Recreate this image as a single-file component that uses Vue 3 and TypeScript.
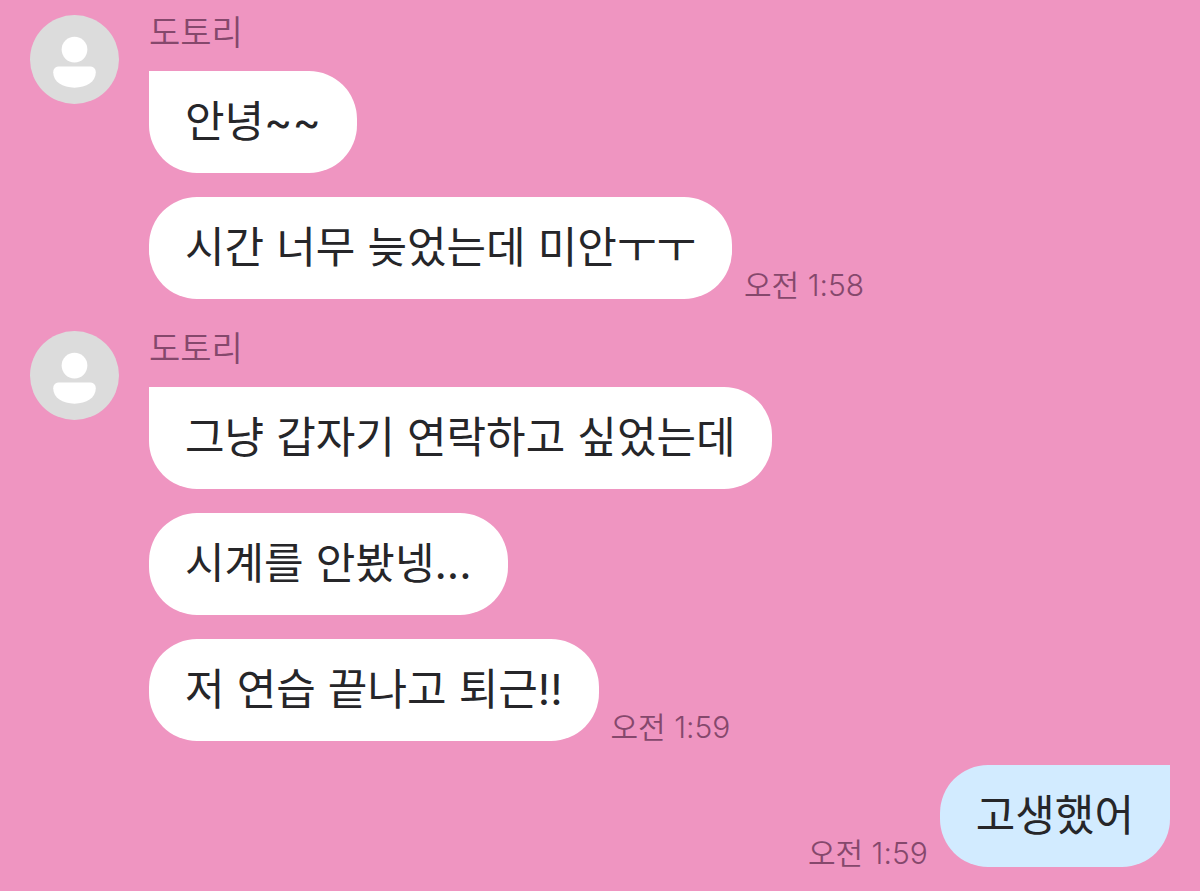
<script setup lang="ts">
interface Message {
  text: string
}

interface Group {
  id: number
  mine: boolean
  sender?: string
  time: string
  messages: Message[]
}

const groups: Group[] = [
  {
    id: 1,
    mine: false,
    sender: '도토리',
    time: '오전 1:58',
    messages: [{ text: '안녕~~' }, { text: '시간 너무 늦었는데 미안ㅜㅜ' }],
  },
  {
    id: 2,
    mine: false,
    sender: '도토리',
    time: '오전 1:59',
    messages: [{ text: '그냥 갑자기 연락하고 싶었는데' }, { text: '시계를 안봤넹...' }, { text: '저 연습 끝나고 퇴근!!' }],
  },
  { id: 3, mine: true, time: '오전 1:59', messages: [{ text: '고생했어' }] },
]
</script>

<template>
  <main class="chat">
    <section v-for="group in groups" :key="group.id" class="group" :class="{ mine: group.mine }">
      <svg v-if="!group.mine" class="avatar" viewBox="0 0 90 90" aria-hidden="true">
        <circle cx="45" cy="45" r="45" fill="#dcdcdc" />
        <circle cx="45" cy="35" r="13" fill="#fff" />
        <path d="M30 52H60C64 52 66.500 54 66.500 58C66.500 68 57 73.500 45 73.500S23.500 68 23.500 58C23.500 54 26 52 30 52Z" fill="#fff" />
      </svg>
      <div class="body">
        <h2 v-if="group.sender" class="sender">{{ group.sender }}</h2>
        <div v-for="(message, index) in group.messages" :key="index" class="row">
          <p class="bubble" :class="{ first: index === 0 }">{{ message.text }}</p>
          <time v-if="index === group.messages.length - 1" class="time">{{ group.time }}</time>
        </div>
      </div>
    </section>
  </main>
</template>

<style>
body {
  margin: 0;
  background: #ef95c1;
}
</style>

<style scoped>
.chat {
  box-sizing: border-box;
  min-height: 100vh;
  padding: 15px 30px 24px;
  display: flex;
  flex-direction: column;
  gap: 24px;
  background: #ef95c1;
  font-family: Inter, "Noto Sans CJK KR", sans-serif;
  font-weight: 370;
}
.group {
  display: flex;
  align-items: flex-start;
  gap: 30px;
}
.group + .group:not(.mine) {
  margin-top: 8px;
}
.group.mine {
  justify-content: flex-end;
}
.avatar {
  flex: none;
  width: 89px;
  height: 89px;
}
.body {
  display: flex;
  flex-direction: column;
  gap: 24px;
}
.sender {
  margin: 0 0 -4px;
  font-size: 34px;
  line-height: 36px;
  font-weight: 350;
  color: #85486c;
}
.row {
  display: flex;
  align-items: flex-end;
  gap: 12px;
}
.mine .row {
  flex-direction: row-reverse;
}
.bubble {
  box-sizing: border-box;
  margin: 0;
  padding: 19px 36px 21px;
  border-radius: 48px;
  background: #fff;
  color: #262629;
  font-size: 43px;
  line-height: 62px;
}
.bubble.first {
  border-top-left-radius: 0;
}
.mine .bubble.first {
  border-radius: 48px 0 48px 48px;
  background: #d2ebff;
}
.time {
  font-size: 30px;
  line-height: 28px;
  font-weight: 350;
  color: #85486c;
  white-space: nowrap;
}
</style>
